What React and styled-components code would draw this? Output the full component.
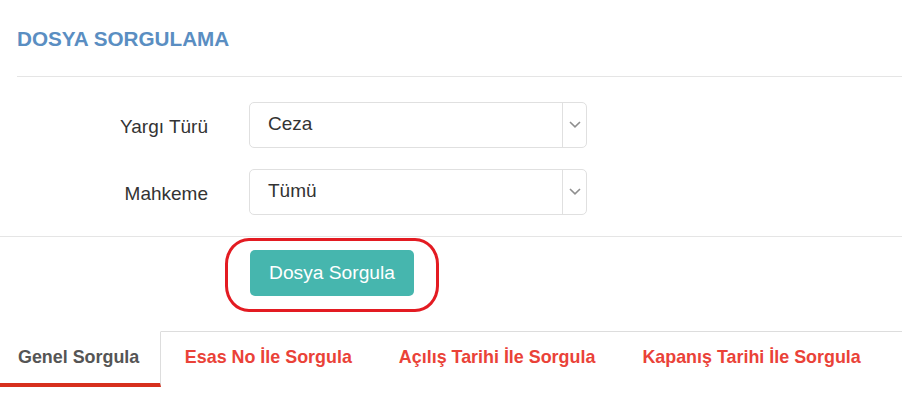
import React, { useState } from "react";
import styled, { createGlobalStyle } from "styled-components";

const GlobalStyle = createGlobalStyle`
  body {
    margin: 0;
    background: #fff;
    font-family: "Liberation Sans", Arial, sans-serif;
    color: #333;
  }
`;

const fields = [
  { label: "Yargı Türü", value: "Ceza" },
  { label: "Mahkeme", value: "Tümü" },
];

const tabs = [
  "Genel Sorgula",
  "Esas No İle Sorgula",
  "Açılış Tarihi İle Sorgula",
  "Kapanış Tarihi İle Sorgula",
];

const Chevron = () => (
  <svg width="12" height="7" viewBox="0 0 12 7">
    <polyline points="1,1 6,5.8 11,1" fill="none" stroke="#8f8f8f" strokeWidth="1.6" />
  </svg>
);

export default function App() {
  const [active, setActive] = useState(0);

  return (
    <Page>
      <GlobalStyle />
      <Header>
        <Title>DOSYA SORGULAMA</Title>
      </Header>

      <Form>
        {fields.map((f) => (
          <FormRow key={f.label}>
            <Label>{f.label}</Label>
            <Select>
              <SelectValue>{f.value}</SelectValue>
              <SelectArrow>
                <Chevron />
              </SelectArrow>
            </Select>
          </FormRow>
        ))}
      </Form>

      <Highlight>
        <SubmitButton>Dosya Sorgula</SubmitButton>
      </Highlight>

      <TabBar>
        {tabs.map((t, i) => (
          <Tab key={t} $active={i === active} onClick={() => setActive(i)}>
            {t}
          </Tab>
        ))}
        <TabFiller />
      </TabBar>
    </Page>
  );
}

const Page = styled.div`
  width: 902px;
  height: 410px;
  overflow: hidden;
`;

const Header = styled.div`
  margin-left: 17px;
  padding: 27px 0 25px;
  border-bottom: 1px solid #e5e5e5;
`;

const Title = styled.h2`
  margin: 0;
  font-size: 20.7px;
  line-height: 24px;
  font-weight: 700;
  color: #5a8ec2;
`;

const Form = styled.div`
  display: flex;
  flex-direction: column;
  gap: 21px;
  padding: 25px 0 21px;
  border-bottom: 1px solid #e5e5e5;
`;

const FormRow = styled.div`
  display: grid;
  grid-template-columns: 208px 338px;
  column-gap: 41px;
  align-items: center;
`;

const Label = styled.label`
  text-align: right;
  font-size: 19px;
  color: #333;
  padding-top: 3px;
`;

const Select = styled.div`
  display: flex;
  height: 46px;
  box-sizing: border-box;
  border: 1px solid #e0e0e0;
  border-radius: 5px;
  background: #fff;
`;

const SelectValue = styled.span`
  flex: 1;
  display: flex;
  align-items: center;
  padding-left: 18px;
  font-size: 19px;
  color: #333;
  padding-bottom: 2px;
`;

const SelectArrow = styled.span`
  width: 23px;
  display: flex;
  align-items: center;
  justify-content: center;
  border-left: 1px solid #e0e0e0;
  padding-bottom: 2px;
`;

const Highlight = styled.div`
  width: 214px;
  height: 74px;
  box-sizing: border-box;
  margin: 1px 0 0 225px;
  padding: 9px 0 0 22px;
  border: 3px solid #e31b22;
  border-radius: 24px / 26px;
`;

const SubmitButton = styled.button`
  width: 164px;
  height: 46px;
  border: none;
  border-radius: 5px;
  background: #46b6ae;
  color: #fff;
  font-family: "Liberation Sans", Arial, sans-serif;
  font-size: 19.2px;
  cursor: pointer;
  padding: 0 0 1px;
`;

const TabBar = styled.div`
  display: flex;
  margin-top: 19px;
`;

const Tab = styled.div`
  height: 56px;
  box-sizing: border-box;
  display: flex;
  align-items: center;
  padding: ${(p) => (p.$active ? "0 21px 0 18px" : "0 23.5px")};
  border-top: 1px solid ${(p) => (p.$active ? "transparent" : "#dddddd")};
  border-right: ${(p) => (p.$active ? "1px solid #dddddd" : "none")};
  border-bottom: 4px solid ${(p) => (p.$active ? "#d7301d" : "transparent")};
  font-size: 17.9px;
  font-weight: 700;
  color: ${(p) => (p.$active ? "#555555" : "#ea4238")};
  white-space: nowrap;
  cursor: pointer;
`;

const TabFiller = styled.div`
  flex: 1;
  height: 56px;
  box-sizing: border-box;
  border-top: 1px solid #dddddd;
`;
